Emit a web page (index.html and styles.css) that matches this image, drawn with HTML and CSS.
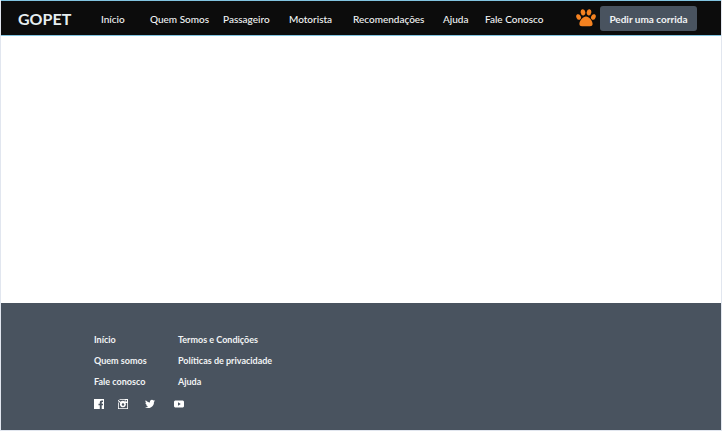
FILE: index.html
```html
<!DOCTYPE html>
<html lang="pt-BR">
<head>
<meta charset="utf-8">
<meta name="viewport" content="width=device-width, initial-scale=1">
<title>GOPET</title>
<link rel="stylesheet" href="styles.css">
</head>
<body>
<header class="topbar">
  <a class="brand" href="#">GOPET</a>
  <nav class="menu">
    <a href="#">Início</a>
    <a href="#">Quem Somos</a>
    <a href="#">Passageiro</a>
    <a href="#">Motorista</a>
    <a href="#">Recomendações</a>
    <a href="#">Ajuda</a>
    <a href="#">Fale Conosco</a>
  </nav>
  <div class="actions">
    <svg class="paw" viewBox="0 0 20 18" aria-hidden="true">
      <ellipse cx="7" cy="3.4" rx="2.3" ry="3.1" transform="rotate(-10 7 3.4)"/>
      <ellipse cx="13" cy="3.4" rx="2.3" ry="3.1" transform="rotate(10 13 3.4)"/>
      <ellipse cx="2.6" cy="8" rx="2.2" ry="2.9" transform="rotate(-25 2.6 8)"/>
      <ellipse cx="17.4" cy="8" rx="2.2" ry="2.9" transform="rotate(25 17.4 8)"/>
      <path d="M10 7.6C7 7.6 3.4 12 3.4 15c0 1.6 1 2.2 2.6 2.2h8c1.600 0 2.600-.6 2.600-2.200 0-3-3.600-7.400-6.600-7.400z"/>
    </svg>
    <button class="ride" type="button">Pedir uma corrida</button>
  </div>
</header>
<main class="content"></main>
<footer class="footer">
  <div class="links">
    <a href="#">Início</a>
    <a href="#">Termos e Condições</a>
    <a href="#">Quem somos</a>
    <a href="#">Políticas de privacidade</a>
    <a href="#">Fale conosco</a>
    <a href="#">Ajuda</a>
  </div>
  <div class="social">
    <a href="#" aria-label="Facebook">
      <svg viewBox="0 0 10 10"><path d="M0 0h10v10H7.700V6.300H9V4.700H7.700V3.700c0-.5.2-.7.700-.7H9V1.500H7.800C6.500 1.500 5.800 2.300 5.800 3.500v1.200H4.500v1.600h1.300V10H0z"/></svg>
    </a>
    <a href="#" aria-label="Instagram">
      <svg viewBox="0 0 10 10"><path fill-rule="evenodd" d="M1.500 0H10v10H0V3.500h.8V9.200h8.400V4H7.600A3 3 0 1 1 2.200 4L0 2V.8l2.600 2A3 3 0 0 1 6.800 2.600V.8H1.500zM7.500 1v1.500H9V1zM5 4.200a1.300 1.300 0 1 0 0 2.600 1.300 1.300 0 0 0 0-2.600z"/></svg>
    </a>
    <a href="#" aria-label="Twitter">
      <svg viewBox="0 0 24 20"><path d="M24 2.400c-.9.400-1.800.7-2.800.8 1-.6 1.800-1.600 2.200-2.700-1 .6-2 1-3.100 1.200a4.900 4.900 0 0 0-8.400 4.500C7.700 6 4.100 4 1.700 1 .4 3.200 1 6.100 3.200 7.600c-.8 0-1.600-.2-2.200-.6 0 2.300 1.600 4.400 3.900 4.900-.7.200-1.500.2-2.200.1.600 2 2.400 3.400 4.600 3.400A9.900 9.900 0 0 1 0 17.400a14 14 0 0 0 21.500-12.500c1-.7 1.800-1.500 2.500-2.500z"/></svg>
    </a>
    <a href="#" aria-label="YouTube">
      <svg viewBox="0 0 10 10"><path fill-rule="evenodd" d="M1 1.500h8l1 1v5l-1 1H1l-1-1v-5zM4 3.300v3.400L6.800 5z"/></svg>
    </a>
  </div>
</footer>
</body>
</html>
```

FILE: styles.css
```css
* {
  box-sizing: border-box;
}

body {
  margin: 0;
  min-height: 100vh;
  display: flex;
  flex-direction: column;
  border: solid #e1e6ef;
  border-width: 0 1px 1px;
  background: #fff;
  color: #f2f4f5;
  font-family: Lato, sans-serif;
}

a {
  color: inherit;
  text-decoration: none;
}

.topbar {
  display: flex;
  align-items: center;
  height: 36px;
  padding: 0 24px 0 17px;
  border: solid #81c4e0;
  border-width: 1px 0;
  background: #0c0c0c;
}

.brand {
  width: 83px;
  color: #e6eef0;
  font-size: 16px;
  font-weight: 700;
}

.menu {
  display: grid;
  grid-template-columns: 49px 73px 66px 64px 90px 42px auto;
  padding-top: 1px;
  font-size: 10px;
  font-weight: 500;
  line-height: 16px;
  white-space: nowrap;
}

.actions {
  display: flex;
  align-items: center;
  gap: 4px;
  margin-left: auto;
}

.paw {
  width: 20px;
  height: 18px;
  fill: #f58220;
}

.ride {
  width: 97px;
  height: 25px;
  padding: 2px 0 0;
  border: 0;
  border-radius: 3px;
  background: #49535f;
  color: #f2f4f5;
  font: 700 10px/16px Lato, sans-serif;
  white-space: nowrap;
}

.content {
  flex: 1;
}

.footer {
  padding: 29px 93px 21px;
  background: #49535f;
}

.links {
  display: grid;
  grid-template-columns: 84px auto;
  justify-content: start;
  row-gap: 5px;
  font-size: 9px;
  font-weight: 700;
  line-height: 16px;
}

.social {
  display: grid;
  grid-template-columns: 24px 27px 29px 10px;
  align-items: center;
  height: 10px;
  margin-top: 9px;
}

.social svg {
  display: block;
  width: 10px;
  height: 10px;
  fill: #fff;
}
```
